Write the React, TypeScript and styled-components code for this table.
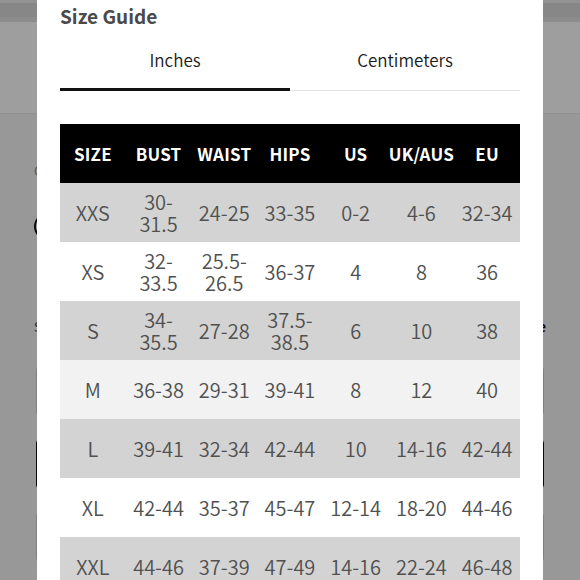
import React from "react";
import styled, { createGlobalStyle } from "styled-components";

const GlobalStyle = createGlobalStyle`
  html, body { margin: 0; padding: 0; height: 100%; overflow: hidden; }
  body { font-family: "Noto Sans CJK SC", "Noto Sans", sans-serif; background: #fff; }
  * { box-sizing: border-box; }
`;

/* ---------- underlying product page ---------- */
const Page = styled.div`
  width: 580px;
  height: 580px;
  display: flex;
  flex-direction: column;
  background: #f5f5f5;
  overflow: hidden;
`;

const TopStrip = styled.div`
  height: 22px;
  background: #dadada;
  border-top: 3px solid #ededed;
  border-bottom: 5px solid #e3e3e3;
`;

const Nav = styled.div`
  height: 92px;
  background: #ffffff;
  border-bottom: 1px solid #ebebeb;
`;

const Content = styled.div`
  display: flex;
  flex-direction: column;
  padding: 48px 36px 0 34px;
`;

const SmallLabel = styled.div`
  font-size: 13px;
  line-height: 18px;
  color: #8a8a8a;
`;

const Swatches = styled.div`
  display: flex;
  gap: 12px;
  margin-top: 33px;
`;

const Swatch = styled.div<{ $color: string; $active?: boolean }>`
  width: 27px;
  height: 27px;
  border-radius: 50%;
  background: ${(p) => p.$color};
  border: 2px solid ${(p) => (p.$active ? "#111" : "#ddd")};
`;

const SizeRow = styled.div`
  display: flex;
  justify-content: space-between;
  margin-top: 78px;
  font-size: 13px;
  line-height: 18px;
  color: #444;
`;

const SizeLink = styled.span`
  color: #111;
  font-weight: 700;
  margin-right: -2px;
`;

const Options = styled.div`
  display: flex;
  flex-direction: column;
  gap: 23px;
  margin-top: 30px;
  padding-left: 2px;
`;

const Option = styled.div<{ $active?: boolean }>`
  height: 50px;
  border-radius: 4px;
  background: #fff;
  border: 1px solid ${(p) => (p.$active ? "#111" : "#cfcfcf")};
`;

/* ---------- modal ---------- */
const Overlay = styled.div`
  position: fixed;
  inset: 0;
  background: rgba(0, 0, 0, 0.38);
  display: flex;
  justify-content: center;
  align-items: flex-start;
  overflow: hidden;
`;

const Modal = styled.div`
  width: 506px;
  min-height: 640px;
  background: #ffffff;
  padding: 4px 23px 0;
  display: flex;
  flex-direction: column;
`;

const Title = styled.h2`
  margin: 0;
  font-size: 19px;
  line-height: 24px;
  font-weight: 700;
  color: #4a4a4a;
`;

const Tabs = styled.div`
  display: flex;
  align-items: flex-end;
`;

const Tab = styled.div<{ $active?: boolean }>`
  flex: 1;
  text-align: center;
  font-size: 17px;
  font-weight: 350;
  line-height: 24px;
  color: #1a1a1a;
  padding-top: 20px;
  padding-bottom: ${(p) => (p.$active ? "16px" : "18px")};
  border-bottom: ${(p) => (p.$active ? "3px solid #111" : "1px solid #e6e6e6")};
`;

const Table = styled.table`
  margin-top: 33px;
  width: 460px;
  border-collapse: collapse;
  table-layout: fixed;
`;

const HeadRow = styled.tr`
  height: 59px;
  background: #000;
`;

const HeadCell = styled.th`
  padding: 0;
  font-size: 17px;
  font-weight: 700;
  color: #fff;
  text-align: center;
  white-space: nowrap;
  letter-spacing: 0.2px;
`;

const toneColor = {
  grey: "#d3d3d3",
  white: "#ffffff",
  light: "#f2f2f2",
} as const;

type Tone = keyof typeof toneColor;

const BodyRow = styled.tr<{ $tone: Tone }>`
  height: 59px;
  background: ${(p) => toneColor[p.$tone]};
`;

const Cell = styled.td`
  padding: 0 5px;
  font-size: 20px;
  font-weight: 350;
  line-height: 22px;
  color: #505050;
  text-align: center;
  vertical-align: middle;
`;

const headers = ["SIZE", "BUST", "WAIST", "HIPS", "US", "UK/AUS", "EU"];

const rows: { cells: string[]; tone: Tone }[] = [
  { cells: ["XXS", "30-31.5", "24-25", "33-35", "0-2", "4-6", "32-34"], tone: "grey" },
  { cells: ["XS", "32-33.5", "25.5-26.5", "36-37", "4", "8", "36"], tone: "white" },
  { cells: ["S", "34-35.5", "27-28", "37.5-38.5", "6", "10", "38"], tone: "grey" },
  { cells: ["M", "36-38", "29-31", "39-41", "8", "12", "40"], tone: "light" },
  { cells: ["L", "39-41", "32-34", "42-44", "10", "14-16", "42-44"], tone: "grey" },
  { cells: ["XL", "42-44", "35-37", "45-47", "12-14", "18-20", "44-46"], tone: "white" },
  { cells: ["XXL", "44-46", "37-39", "47-49", "14-16", "22-24", "46-48"], tone: "grey" },
];

export default function App() {
  return (
    <>
      <GlobalStyle />
      <Page>
        <TopStrip />
        <Nav />
        <Content>
          <SmallLabel>Color</SmallLabel>
          <Swatches>
            <Swatch $color="#ffffff" $active />
            <Swatch $color="#e8d9c8" />
            <Swatch $color="#333" />
          </Swatches>
          <SizeRow>
            <span>Size</span>
            <SizeLink>Guide</SizeLink>
          </SizeRow>
          <Options>
            <Option />
            <Option $active />
            <Option />
          </Options>
        </Content>
      </Page>
      <Overlay>
        <Modal>
          <Title>Size Guide</Title>
          <Tabs>
            <Tab $active>Inches</Tab>
            <Tab>Centimeters</Tab>
          </Tabs>
          <Table>
            <thead>
              <HeadRow>
                {headers.map((h) => (
                  <HeadCell key={h}>{h}</HeadCell>
                ))}
              </HeadRow>
            </thead>
            <tbody>
              {rows.map((r) => (
                <BodyRow key={r.cells[0]} $tone={r.tone}>
                  {r.cells.map((c, i) => (
                    <Cell key={i}>{c}</Cell>
                  ))}
                </BodyRow>
              ))}
            </tbody>
          </Table>
        </Modal>
      </Overlay>
    </>
  );
}
